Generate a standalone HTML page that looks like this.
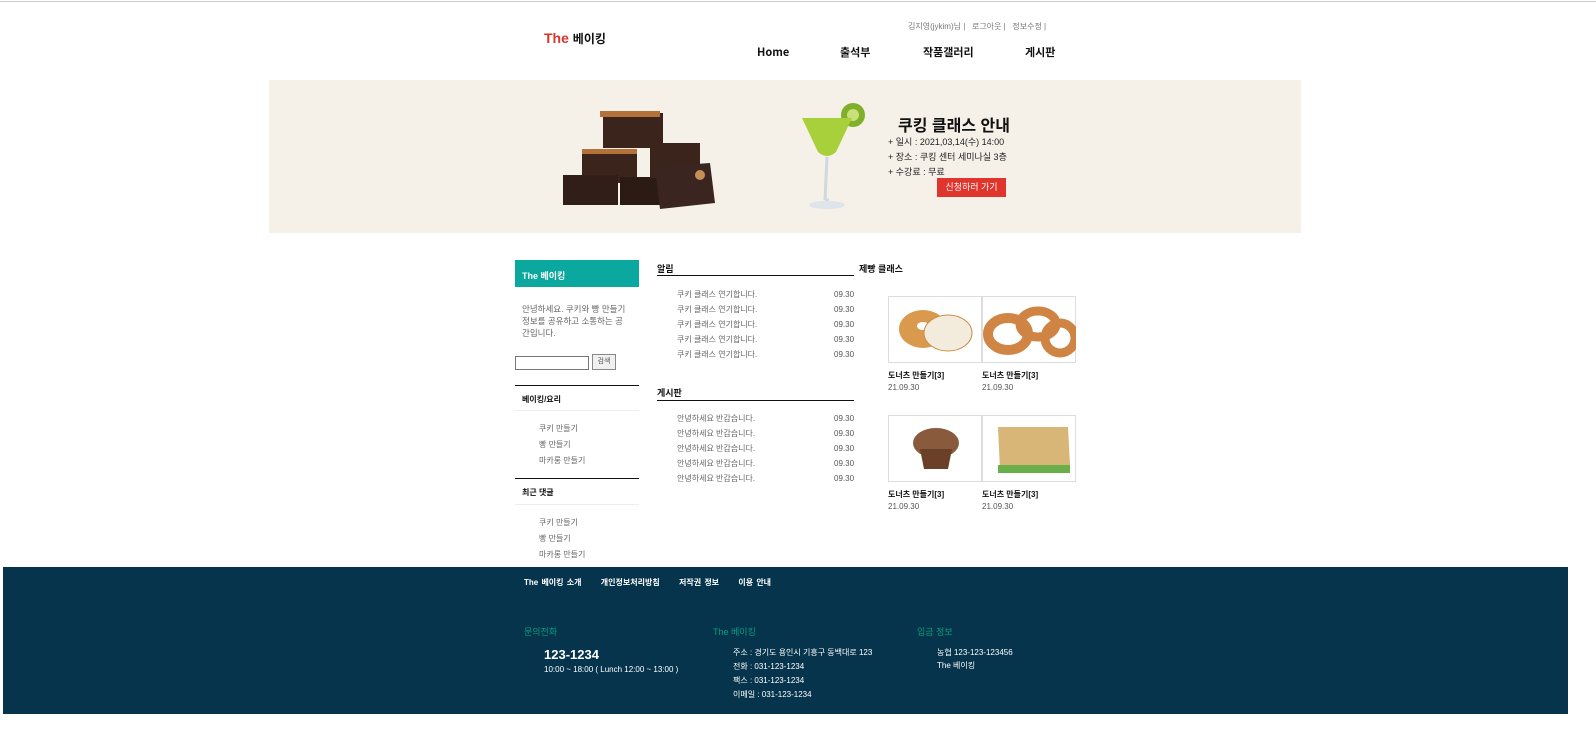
<!DOCTYPE html>
<html><head><meta charset="utf-8"><style>
*{margin:0;padding:0;box-sizing:border-box}
body{width:1596px;height:733px;background:#fff;font-family:"Liberation Sans","Noto Sans CJK KR",sans-serif;position:relative;overflow:hidden;color:#333}
.a{position:absolute;white-space:nowrap}
.s{font-size:8px;color:#555}
.b{font-weight:bold;color:#111}
.nav{top:44px;font-size:11px;line-height:16px;height:16px}
</style></head><body>
<div class="a" style="left:0;top:1px;width:1596px;height:1px;background:#ccc"></div>

<div class="a" style="left:544px;top:30px;font-size:14px;font-weight:bold"><span style="color:#d9342b">The</span> <span style="font-size:12px;color:#111">베이킹</span></div>
<div class="a s" style="left:908px;top:21px;color:#777">김지영(jykim)님 | &nbsp; 로그아웃 | &nbsp; 정보수정 |</div>
<div class="a b nav" style="left:757px;"><span style="font-family:'Noto Sans CJK KR',sans-serif">Home</span></div>
<div class="a b nav" style="left:840px;"><span style="font-family:'Noto Sans CJK KR',sans-serif">출석부</span></div>
<div class="a b nav" style="left:923px;"><span style="font-family:'Noto Sans CJK KR',sans-serif">작품갤러리</span></div>
<div class="a b nav" style="left:1025px;"><span style="font-family:'Noto Sans CJK KR',sans-serif">게시판</span></div>

<div class="a" style="left:269px;top:80px;width:1032px;height:153px;background:#f5f1e8"></div>
<svg class="a" style="left:560px;top:105px" width="160" height="105">
<rect x="43" y="8" width="60" height="35" fill="#3a241c"/><rect x="40" y="6" width="60" height="6" fill="#b5713a"/>
<rect x="22" y="45" width="55" height="33" fill="#3b241c"/><rect x="22" y="44" width="55" height="5" fill="#b5713a"/>
<rect x="3" y="70" width="55" height="30" fill="#321e18"/><rect x="60" y="72" width="45" height="28" fill="#2c1a15"/>
<rect x="90" y="38" width="50" height="35" fill="#3a241c"/>
<polygon points="95,62 150,58 155,98 100,104" fill="#3b2520"/>
<circle cx="140" cy="70" r="5" fill="#c49056"/>
</svg>
<svg class="a" style="left:800px;top:100px" width="70" height="112">
<circle cx="53" cy="15" r="12" fill="#7fb02a"/><circle cx="53" cy="15" r="6" fill="#c9e07a"/>
<path d="M2 18 L52 18 L36 52 Q27 60 18 52 Z" fill="#a7d03a"/>
<path d="M27 57 L25 100 M25 100 L29 100" stroke="#cfd8e0" stroke-width="3"/>
<ellipse cx="27" cy="105" rx="18" ry="4" fill="#dde4ea"/>
</svg>
<div class="a b" style="left:898px;top:112px;font-size:16px">쿠킹 클래스 안내</div>
<div class="a" style="left:888px;top:135px;font-size:9px;color:#222;line-height:15px">+ 일시 : 2021,03,14(수) 14:00<br>+ 장소 : 쿠킹 센터 세미나실 3층<br>+ 수강료 : 무료</div>
<div class="a" style="left:937px;top:178px;width:69px;height:19px;background:#e0352d;color:#fff;font-size:9px;text-align:center;line-height:19px">신청하러 가기</div>

<div class="a" style="left:515px;top:260px;width:124px;height:27px;background:#0aa89e;color:#fff;font-size:9px;font-weight:bold;padding:9px 0 0 7px">The 베이킹</div>
<div class="a s" style="left:522px;top:303px;line-height:12px;color:#666;font-size:8.5px">안녕하세요. 쿠키와 빵 만들기<br>정보를 공유하고 소통하는 공<br>간입니다.</div>
<div class="a" style="left:515px;top:356px;width:74px;height:14px;border:1px solid #777"></div>
<div class="a s" style="left:592px;top:354px;width:24px;height:16px;border:1px solid #888;background:#f0f0f0;text-align:center;line-height:14px;font-size:7px">검색</div>
<div class="a" style="left:515px;top:385px;width:124px;height:1px;background:#111"></div>
<div class="a b" style="left:522px;top:394px;font-size:8px">베이킹/요리</div>
<div class="a" style="left:515px;top:410px;width:124px;height:1px;background:#eee"></div>
<div class="a s" style="left:539px;top:421px;line-height:16px;color:#666">쿠키 만들기<br>빵 만들기<br>마카롱 만들기</div>
<div class="a" style="left:515px;top:478px;width:124px;height:1px;background:#111"></div>
<div class="a b" style="left:522px;top:487px;font-size:8px">최근 댓글</div>
<div class="a" style="left:515px;top:504px;width:124px;height:1px;background:#eee"></div>
<div class="a s" style="left:539px;top:515px;line-height:16px;color:#666">쿠키 만들기<br>빵 만들기<br>마카롱 만들기</div>

<div class="a b" style="left:657px;top:262px;font-size:9px">알림</div>
<div class="a" style="left:657px;top:275px;width:197px;height:1px;background:#111"></div>
<div class="a s" style="left:677px;top:287px;line-height:15px;color:#666">쿠키 클래스 연기합니다.<br>쿠키 클래스 연기합니다.<br>쿠키 클래스 연기합니다.<br>쿠키 클래스 연기합니다.<br>쿠키 클래스 연기합니다.</div>
<div class="a s" style="left:834px;top:287px;line-height:15px">09.30<br>09.30<br>09.30<br>09.30<br>09.30</div>
<div class="a b" style="left:657px;top:386px;font-size:9px">게시판</div>
<div class="a" style="left:657px;top:400px;width:197px;height:1px;background:#111"></div>
<div class="a s" style="left:677px;top:411px;line-height:15px;color:#666">안녕하세요 반갑습니다.<br>안녕하세요 반갑습니다.<br>안녕하세요 반갑습니다.<br>안녕하세요 반갑습니다.<br>안녕하세요 반갑습니다.</div>
<div class="a s" style="left:834px;top:411px;line-height:15px">09.30<br>09.30<br>09.30<br>09.30<br>09.30</div>

<div class="a b" style="left:859px;top:262px;font-size:9px">제빵 클래스</div>
<svg class="a" style="left:888px;top:296px" width="188" height="68">
<rect x="0.5" y="0.5" width="93" height="66" fill="#fff" stroke="#ddd"/><rect x="94.5" y="0.5" width="93" height="66" fill="#fff" stroke="#ddd"/>
<ellipse cx="35" cy="33" rx="24" ry="19" fill="#d99a4e"/><ellipse cx="35" cy="30" rx="6" ry="4" fill="#fff"/>
<ellipse cx="60" cy="37" rx="24" ry="18" fill="#f3ecdc" stroke="#c98c45"/>
<ellipse cx="120" cy="38" rx="20" ry="16" fill="none" stroke="#d08545" stroke-width="10"/>
<ellipse cx="150" cy="28" rx="18" ry="13" fill="none" stroke="#cf8444" stroke-width="9"/>
<ellipse cx="172" cy="42" rx="15" ry="15" fill="none" stroke="#cf8444" stroke-width="9"/>
</svg>
<div class="a b" style="left:888px;top:370px;font-size:8px">도너츠 만들기[3]</div>
<div class="a b" style="left:982px;top:370px;font-size:8px">도너츠 만들기[3]</div>
<div class="a s" style="left:888px;top:383px">21.09.30</div>
<div class="a s" style="left:982px;top:383px">21.09.30</div>
<svg class="a" style="left:888px;top:415px" width="188" height="68">
<rect x="0.5" y="0.5" width="93" height="66" fill="#fff" stroke="#ddd"/><rect x="94.5" y="0.5" width="93" height="66" fill="#fff" stroke="#ddd"/>
<ellipse cx="48" cy="28" rx="23" ry="15" fill="#8a5a3c"/><path d="M32 34 L64 34 L60 54 L36 54 Z" fill="#6b4028"/>
<path d="M110 12 L180 12 L182 50 L112 55 Z" fill="#d8b678"/><rect x="110" y="50" width="72" height="8" fill="#6ab04a"/>
</svg>
<div class="a b" style="left:888px;top:489px;font-size:8px">도너츠 만들기[3]</div>
<div class="a b" style="left:982px;top:489px;font-size:8px">도너츠 만들기[3]</div>
<div class="a s" style="left:888px;top:502px">21.09.30</div>
<div class="a s" style="left:982px;top:502px">21.09.30</div>

<div class="a" style="left:3px;top:567px;width:1565px;height:147px;background:#05344c"></div>
<div class="a" style="left:524px;top:577px;font-size:8px;font-weight:bold;color:#fff;word-spacing:1px">The 베이킹 소개 &nbsp;&nbsp;&nbsp;&nbsp; 개인정보처리방침 &nbsp;&nbsp;&nbsp;&nbsp; 저작권 정보 &nbsp;&nbsp;&nbsp;&nbsp; 이용 안내</div>
<div class="a" style="left:524px;top:625px;font-size:9px;color:#0a9d7c">문의전화</div>
<div class="a" style="left:713px;top:625px;font-size:9px;color:#0a9d7c">The 베이킹</div>
<div class="a" style="left:917px;top:625px;font-size:9px;color:#0a9d7c">입금 정보</div>
<div class="a" style="left:544px;top:647px;font-size:13px;font-weight:bold;color:#fff">123-1234</div>
<div class="a" style="left:544px;top:665px;font-size:8px;color:#fff">10:00 ~ 18:00 ( Lunch 12:00 ~ 13:00 )</div>
<div class="a" style="left:733px;top:646px;font-size:8px;color:#fff;line-height:14px">주소 : 경기도 용인시 기흥구 동백대로 123<br>전화 : 031-123-1234<br>팩스 : 031-123-1234<br>이메일 : 031-123-1234</div>
<div class="a" style="left:937px;top:646px;font-size:8px;color:#fff;line-height:13px">농협 123-123-123456<br>The 베이킹</div>
</body></html>
